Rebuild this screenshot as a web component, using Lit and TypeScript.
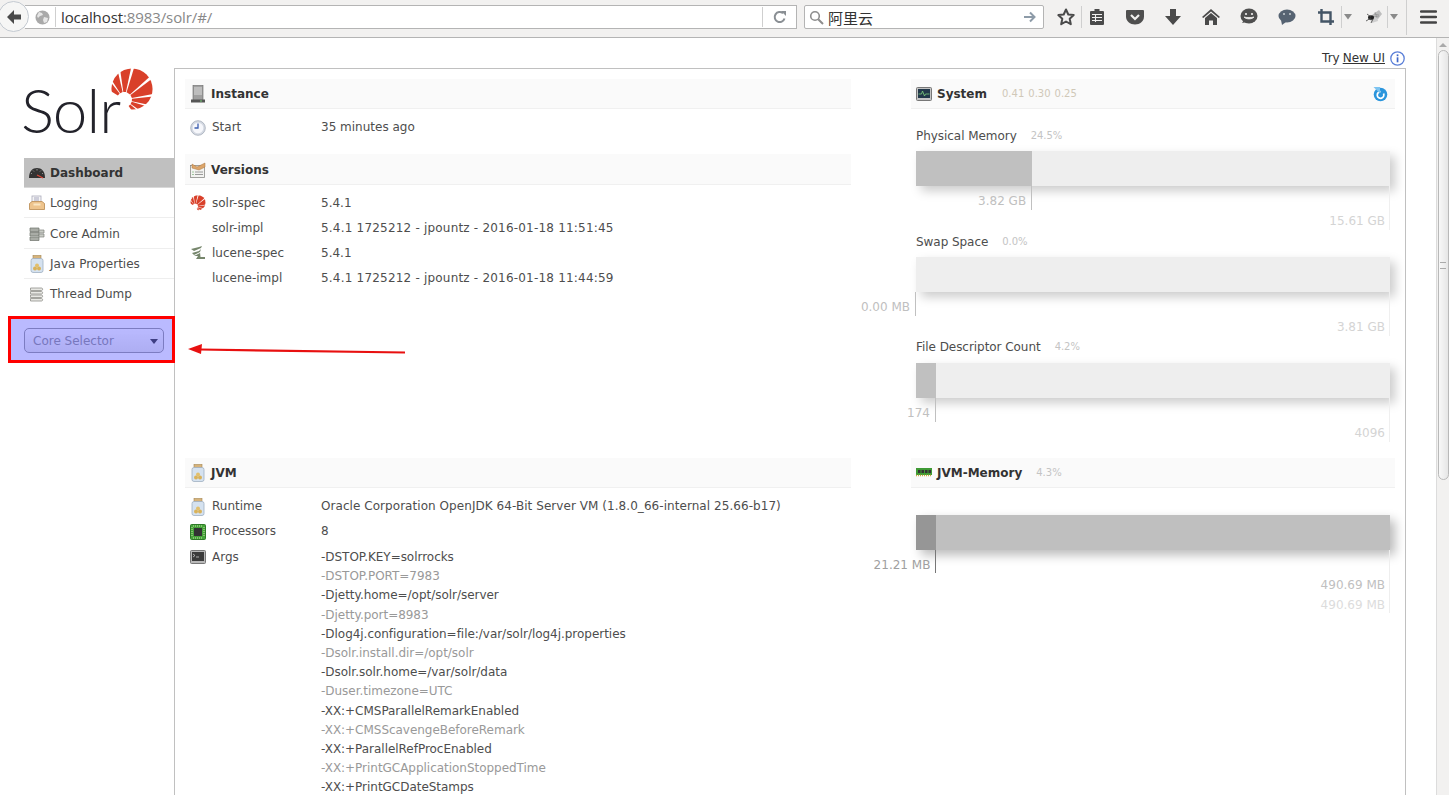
import { LitElement, html, css, svg } from "lit";
import { customElement } from "lit/decorators.js";

const WEDGES: [number, number][] = [[128, 148], [103, 123], [78, 98], [42, 73], [11, 37], [-12, 6], [-35, -17], [-56, -40]];
function sun(size: number) {
  const fx = 15, fy = 33;
  const pt = (r: number, a: number) => `${(fx + r * Math.cos((a * Math.PI) / 180)).toFixed(2)} ${(fy - r * Math.sin((a * Math.PI) / 180)).toFixed(2)}`;
  return html`<svg width=${size} height=${size} viewBox="0 0 46 46">
    <defs><clipPath id="sunclip"><circle cx="23" cy="22" r="21.5"></circle></clipPath></defs>
    <g clip-path="url(#sunclip)" fill="#d9402a">
      ${WEDGES.map(([a, b]) => svg`<path d="M${pt(8, a)} L${pt(60, a)} L${pt(60, b)} L${pt(8, b)} Z"></path>`)}
    </g></svg>`;
}

const I = {
  back: html`<svg width="18" height="18" viewBox="0 0 18 18"><path d="M9 2 2 9l7 7v-4.4h7V6.4H9z" fill="#4a4a4a"/></svg>`,
  globe: html`<svg width="15" height="15" viewBox="0 0 15 15"><circle cx="7.5" cy="7.5" r="7" fill="#a9a9a9"/><path d="M4 2l3 1 1 2-3 1-2 2-1-2zM9 7l4 1-1 4-3 1-1-3z" fill="#e6e6e6"/></svg>`,
  reload: html`<svg width="14" height="14" viewBox="0 0 14 14"><path d="M11.5 8.5A5 5 0 1 1 10 3.3" fill="none" stroke="#8a8f94" stroke-width="2"/><path d="M8 1h5v5z" fill="#8a8f94"/></svg>`,
  search: html`<svg width="15" height="15" viewBox="0 0 15 15"><circle cx="6" cy="6" r="4.3" fill="none" stroke="#8d8d8d" stroke-width="1.6"/><path d="M9.2 9.2 14 14" stroke="#8d8d8d" stroke-width="2"/></svg>`,
  go: html`<svg width="14" height="14" viewBox="0 0 14 14"><path d="M1 7h10M7 2.5 11.5 7 7 11.5" fill="none" stroke="#8d9ba8" stroke-width="2"/></svg>`,
  star: html`<svg width="20" height="20" viewBox="0 0 20 20"><path d="M10 2.5l2.3 5 5.4.6-4 3.7 1.1 5.4-4.8-2.7-4.8 2.7 1.1-5.4-4-3.7 5.4-.6z" fill="none" stroke="#4a4a4a" stroke-width="2" stroke-linejoin="round"/></svg>`,
  clip: html`<svg width="16" height="18" viewBox="0 0 16 18"><path d="M5.5 1h5v2H14a1 1 0 0 1 1 1v12a1 1 0 0 1-1 1H2a1 1 0 0 1-1-1V4a1 1 0 0 1 1-1h3.500z" fill="#4a4a4a"/><path d="M3 6.500h10M3 9.500h10M3 12.500h10M6.500 6v8" stroke="#f2f1f0" stroke-width="1.100" fill="none"/></svg>`,
  pocket: html`<svg width="18" height="16" viewBox="0 0 18 16"><path d="M1 1h16a1 1 0 0 1 1 1v5.500c0 4.500-4 8-9 8s-9-3.500-9-8V2a1 1 0 0 1 1-1z" fill="#4f4f4f"/><path d="M5 6l4 4 4-4" fill="none" stroke="#f2f1f0" stroke-width="2.200"/></svg>`,
  down: html`<svg width="16" height="16" viewBox="0 0 16 16"><path d="M5 0h6v7h5l-8 9-8-9h5z" fill="#4a4a4a"/></svg>`,
  home: html`<svg width="18" height="16" viewBox="0 0 18 16"><path d="M9 0 0 8l1.300 1L9 2.500 16.700 9 18 8z" fill="#4a4a4a"/><path d="M9 4 3 9v7h4v-4.500h4V16h4V9z" fill="#4a4a4a"/></svg>`,
  smile: html`<svg width="18" height="18" viewBox="0 0 18 18"><ellipse cx="9" cy="8" rx="8.500" ry="7.500" fill="#4f4f4f"/><path d="M2 15l2-3 3 2z" fill="#4f4f4f"/><circle cx="6" cy="6" r="1.100" fill="#f2f1f0"/><circle cx="12" cy="6" r="1.100" fill="#f2f1f0"/><path d="M4 9c2 2.500 8 2.500 10 0-2 .8-8 .8-10 0z" fill="#f2f1f0" stroke="#f2f1f0" stroke-width=".8"/></svg>`,
  chat: html`<svg width="18" height="16" viewBox="0 0 18 16"><ellipse cx="9" cy="7" rx="8.500" ry="6.500" fill="#566372"/><path d="M3 11l1 5 4-3z" fill="#566372"/><circle cx="6" cy="5" r="1" fill="#c9ced3"/><circle cx="12" cy="5" r="1" fill="#c9ced3"/></svg>`,
  crop: html`<svg width="16" height="16" viewBox="0 0 16 16"><path d="M3.500 0v12.500H16M0 3.500h12.500V16" fill="none" stroke="#445566" stroke-width="2.400"/></svg>`,
  caret: html`<svg width="8" height="6" viewBox="0 0 8 6"><path d="M0 0h8L4 5.500z" fill="#8a8a8a"/></svg>`,
  fly: html`<svg width="16" height="14" viewBox="0 0 16 14"><path d="M6 5 13 0l3 4-4 5-5 1z" fill="#bdbdbd"/><path d="M3 8l8-2 1 5-6 2z" fill="#cfcfcf"/><path d="M8 4l5 1M7 7l6-1M9 2l2 6" stroke="#8a8a8a" stroke-width=".6"/><ellipse cx="5" cy="7.500" rx="3" ry="2.300" fill="#222"/><path d="M0 11l5-3M1 4l4 3M5 13l2-4" stroke="#444" stroke-width=".8"/></svg>`,
  burger: html`<svg width="17" height="14" viewBox="0 0 17 14"><path d="M1 1.500h15M1 7h15M1 12.500h15" stroke="#444" stroke-width="2.400" stroke-linecap="round"/></svg>`,
  info: html`<svg width="15" height="15" viewBox="0 0 15 15"><circle cx="7.500" cy="7.500" r="6.700" fill="#fff" stroke="#5a7fd8" stroke-width="1.300"/><rect x="6.700" y="6.300" width="1.700" height="5" fill="#3f66c8"/><rect x="6.700" y="3.400" width="1.700" height="1.800" fill="#3f66c8"/></svg>`,
  refresh: html`<svg width="16" height="16" viewBox="0 0 16 16"><circle cx="8.500" cy="8.500" r="6.800" fill="#2b95dc"/><path d="M11.500 7.500a3.300 3.300 0 1 1-3-1.800" fill="none" stroke="#fff" stroke-width="1.700"/><path d="M1.500 1h6.500v6.500z" fill="#7cc3f0"/></svg>`,
  gauge: html`<svg width="16" height="12" viewBox="0 0 16 12"><path d="M0 11C0 4 3.500 1 8 1s8 3 8 10z" fill="#333"/><path d="M2 6.500h1M4 3.500l1 1M8 2v1.500M12 3.500l-1 1M13 6.500h1" stroke="#aaa" stroke-width=".8"/><path d="M8 8l6 3" stroke="#e04a3a" stroke-width="1.100"/></svg>`,
  tray: html`<svg width="16" height="16" viewBox="0 0 16 16"><rect x="3" y="1" width="9" height="8" fill="#f5f5f5" stroke="#aab" stroke-width=".8"/><path d="M5 3h5M5 5h5" stroke="#88a" stroke-width=".7"/><path d="M0.500 8.500 3 6.500h10l2.500 2v6h-15z" fill="#eec48d" stroke="#b9894f" stroke-width=".8"/><path d="M4.500 8.500h7v2h-7z" fill="#fbe6c2"/></svg>`,
  servers: html`<svg width="16" height="16" viewBox="0 0 16 16"><path d="M1 2h9v3.500H1zM1 6.500h9V10H1zM1 11h9v3.500H1z" fill="#a9aca6" stroke="#6f726c" stroke-width=".7"/><path d="M10 4h5v3h-5zM10 8h5v3h-5z" fill="#c9ccc6" stroke="#7f827c" stroke-width=".7"/></svg>`,
  jar: html`<svg width="14" height="18" viewBox="0 0 14 18"><rect x="3" y="0.500" width="8" height="3" fill="#d6b37b" stroke="#a58650" stroke-width=".6"/><rect x="1" y="3.500" width="12" height="14" rx="2" fill="#d5e2f0" stroke="#9fb0c2" stroke-width=".8"/><circle cx="5" cy="13.500" r="2" fill="#d9b25a"/><circle cx="9" cy="13.500" r="2" fill="#d9b25a"/><circle cx="7" cy="10.500" r="2" fill="#e2bf6c"/></svg>`,
  stack: html`<svg width="16" height="16" viewBox="0 0 16 16"><path d="M1.500 2h11c1.500 0 1.500 2.500 0 2.500h-11zM1.500 5.500h11c1.500 0 1.500 2.500 0 2.500h-11zM1.500 9h11c1.500 0 1.500 2.500 0 2.500h-11zM1.500 12.500h11c1.500 0 1.500 2.500 0 2.500h-11z" fill="#e8e8e4" stroke="#8f8f8a" stroke-width=".8"/></svg>`,
  server: html`<svg width="16" height="18" viewBox="0 0 16 18"><rect x="3" y="0.500" width="10" height="15" fill="#a0a0a0" stroke="#666" stroke-width=".6"/><path d="M4 3h8M4 5h8M4 7h8M4 9h8" stroke="#dcdcdc"/><rect x="1" y="14.500" width="14" height="3" fill="#555"/><rect x="10" y="15.500" width="2" height="1" fill="#7c7"/></svg>`,
  clock: html`<svg width="16" height="16" viewBox="0 0 16 16"><circle cx="8" cy="8" r="7.300" fill="#d5dae3" stroke="#a5acb9" stroke-width=".8"/><circle cx="8" cy="8" r="5.300" fill="#f6f7fb"/><path d="M8 3.500V8H4.500" fill="none" stroke="#3c5fb0" stroke-width="1.300"/></svg>`,
  versions: html`<svg width="16" height="16" viewBox="0 0 16 16"><rect x="0.500" y="3.500" width="14" height="12" fill="#f3f3f1" stroke="#8c8c88" stroke-width=".8"/><path d="M2 2l5 3 8-4v4l-6 3-7-2z" fill="#dca56a" stroke="#a9743c" stroke-width=".5"/><path d="M2.500 10h1M2.500 12.500h1" stroke="#4a9a4a"/><path d="M5 10h8M5 12.500h8" stroke="#9a9a9a"/></svg>`,
  lucene: html`<svg width="16" height="16" viewBox="0 0 16 16"><path d="M1 4l8-2 3-1-1 2-7 3zM2 8l7-2 2-2-1 3-6 3zM4 11l6-3 0-1 .5 5H15v2H6l2-3z" fill="#76866c"/></svg>`,
  chip: html`<svg width="16" height="16" viewBox="0 0 16 16"><rect x="0.500" y="0.500" width="15" height="15" rx="1" fill="#45a339" stroke="#2e7a27"/><rect x="4" y="4" width="8" height="8" fill="#333"/><path d="M2 3v10M14 3v10M3 2h10M3 14h10" stroke="#c7e2a8" stroke-dasharray="1 1"/></svg>`,
  term: html`<svg width="16" height="14" viewBox="0 0 16 14"><rect x="0.500" y="0.500" width="15" height="13" rx="1" fill="#b8b8b8" stroke="#777"/><rect x="2" y="2" width="12" height="9" fill="#3a3a3a"/><path d="M3 4l2 1.500L3 7M6 7h3" stroke="#ddd" stroke-width=".7" fill="none"/></svg>`,
  sys: html`<svg width="16" height="14" viewBox="0 0 16 14"><rect x="0.500" y="0.500" width="15" height="13" rx="1" fill="#c4c4c4" stroke="#777"/><rect x="2" y="2" width="12" height="9" fill="#22384a"/><path d="M2.500 7h3l1-3 2 5 1-2h4" stroke="#7fd07f" stroke-width=".8" fill="none"/></svg>`,
  ram: html`<svg width="16" height="9" viewBox="0 0 16 9"><rect x="0" y="0" width="16" height="7" fill="#3f9a35"/><path d="M2 2h2.500v3H2zM5.500 2H8v3H5.500zM9 2h2.500v3H9zM12.500 2H15v3h-2.500z" fill="#333"/><path d="M0 7.500h16" stroke="#c9a83f" stroke-width="1.500" stroke-dasharray="1 1"/></svg>`,
};

const ARGS = [
  "-DSTOP.KEY=solrrocks", "-DSTOP.PORT=7983", "-Djetty.home=/opt/solr/server", "-Djetty.port=8983",
  "-Dlog4j.configuration=file:/var/solr/log4j.properties", "-Dsolr.install.dir=/opt/solr",
  "-Dsolr.solr.home=/var/solr/data", "-Duser.timezone=UTC", "-XX:+CMSParallelRemarkEnabled",
  "-XX:+CMSScavengeBeforeRemark", "-XX:+ParallelRefProcEnabled", "-XX:+PrintGCApplicationStoppedTime",
  "-XX:+PrintGCDateStamps",
];

interface Bar { title?: string; pct?: string; used: number; usedLabel: string; totalLabel: string; }
const BARS: Bar[] = [
  { title: "Physical Memory", pct: "24.5%", used: 24.5, usedLabel: "3.82 GB", totalLabel: "15.61 GB" },
  { title: "Swap Space", pct: "0.0%", used: 0, usedLabel: "0.00 MB", totalLabel: "3.81 GB" },
  { title: "File Descriptor Count", pct: "4.2%", used: 4.2, usedLabel: "174", totalLabel: "4096" },
];

@customElement("app-root")
export class AppRoot extends LitElement {
  static styles = css`
    :host { display: block; height: 795px; overflow: hidden; position: relative; background: #fff;
      font-family: "DejaVu Sans", sans-serif; font-size: 12px; color: #4d4d4d; }
    .toolbar { height: 37px; background: #f2f1f0; border-bottom: 1px solid #b4b4b4; display: flex; align-items: center; padding-left: 25px; position: relative; }
    .backbtn { position: absolute; left: -2px; top: 1px; width: 29px; height: 29px; border-radius: 50%; background: #f6f6f5; border: 1px solid #c4cad1; display: flex; align-items: center; justify-content: center; }
    .urlbar { width: 772px; height: 24px; box-sizing: border-box; background: #fff; border: 1px solid #b4b4b4; border-left: 0; display: flex; align-items: center; margin-top: -3px; }
    .globe { margin-left: 10px; display: flex; }
    .vsep { width: 1px; height: 20px; background: #cfcfcf; flex: none; }
    .urlbar .vsep { margin-left: 5px; }
    .url { font-family: "Open Sans", sans-serif; font-size: 15px; letter-spacing: -0.1px; color: #888; margin-left: 5px; flex: 1; white-space: nowrap; }
    .url b { font-weight: 400; color: #333; }
    .rel { width: 33px; display: flex; justify-content: center; }
    .search { width: 240px; height: 24px; box-sizing: border-box; background: #fff; border: 1px solid #b4b4b4; border-radius: 2px; margin-left: 7px; margin-top: -3px; display: flex; align-items: center; padding: 0 6px 0 4px; }
    .search span { font-family: "Noto Sans CJK SC", sans-serif; font-size: 15px; color: #333; margin-left: 4px; flex: 1; }
    .search svg { flex: none; }
    .slot { display: flex; align-items: center; justify-content: center; height: 36px; margin-top: -3px; flex: none; }
    .w30 { width: 30px; } .w38 { width: 38px; } .w11 { width: 11px; } .w26 { width: 26px; } .w42 { width: 42px; }
    .bsep { height: 22px; margin-top: -3px; }
    .tall { height: 36px; }
    .ml7 { margin-left: 7px; } .ml4 { margin-left: 4px; } .ml5 { margin-left: 5px; } .ml8 { margin-left: 8px; }

    .viewport { display: flex; height: 757px; overflow: hidden; }
    .page { flex: 1; min-width: 0; }
    .scroll { width: 13px; background: #f2f1f0; border-left: 1px solid #dcdcdc; box-sizing: border-box; display: flex; flex-direction: column; align-items: center; }
    .sup { width: 0; height: 0; border-left: 4px solid transparent; border-right: 4px solid transparent; border-bottom: 4px solid #aaa; margin: 5px 0 3px; }
    .thumb { width: 11px; height: 430px; box-sizing: border-box; border: 1px solid #b9b9b9; border-radius: 6px; background: linear-gradient(90deg, #f8f8f8, #e6e6e6); display: flex; align-items: center; justify-content: center; }
    .thumb i { display: block; width: 6px; height: 5px; border-top: 1px solid #aaa; border-bottom: 1px solid #aaa; }

    .try { height: 30px; box-sizing: border-box; padding: 10px 31px 0 0; display: flex; justify-content: flex-end; align-items: center; gap: 3px; color: #333; font-size: 12px; }
    .try a { color: #333; text-decoration: underline; }
    .try svg { margin-left: 2px; }
    .wrap { display: flex; padding-left: 24px; padding-right: 30px; }
    .side { width: 150px; flex: none; }
    .logo { height: 90px; display: flex; position: relative; }
    .logo .word { font-family: "Lato", "Open Sans", sans-serif; font-weight: 300; font-size: 62px; color: #23232b; line-height: 62px; margin-top: 10px; margin-left: -3px; letter-spacing: -1px; }
    .logo svg { position: absolute; left: 85.500px; top: -0.500px; }
    nav a { display: flex; align-items: center; height: 29px; padding-left: 5px; gap: 5px; border-bottom: 1px solid #eee; color: #4d4d4d; }
    nav a:nth-child(3) { height: 29px; padding-top: 1px; }
    nav a:last-child { border-bottom: 0; }
    nav a.on { background: #c0c0c0; font-weight: 700; color: #333; border-bottom: 1px solid #d8d8d8; }
    nav .ic { width: 16px; display: flex; justify-content: center; align-items: center; flex: none; }
    .select { margin-top: 20px; width: 140px; height: 25px; box-sizing: border-box; border: 1px solid #aaa; border-radius: 5px; background: linear-gradient(#fff, #eee); display: flex; align-items: center; padding: 1px 5px 0 8px; color: #a4a4a4; }
    .select span { flex: 1; }
    .select i { width: 0; height: 0; border-left: 4px solid transparent; border-right: 4px solid transparent; border-top: 5px solid #555; }

    .content { flex: 1; min-width: 0; height: 740px; border: 1px solid #c0c0c0; border-bottom: 0; padding: 10px; box-sizing: border-box; display: grid; grid-template-columns: 666px 484px; column-gap: 60px; grid-template-rows: 379px auto; }
    h2 { margin: 0; height: 29px; background: #fafafa; border-bottom: 1px solid #f0f0f0; display: flex; align-items: center; padding-left: 5px; gap: 5px; font-size: 12px; font-weight: 700; color: #333; }
    h2 .ic { width: 16px; display: flex; justify-content: center; flex: none; }
    h2 small { font-size: 10px; font-weight: 400; color: #c4c4c4; margin-left: 9px; }
    h2 .load { display: flex; gap: 4px; margin-left: 10px; font-size: 10px; font-weight: 400; color: #d0c8b8; flex: 1; }
    h2 .end { margin-right: 7px; display: flex; }
    section + section { margin-top: 14px; }
    section + section h2 { height: 29px; padding-top: 1px; }
    .rows { margin-top: 6px; }
    section + section .rows { margin-top: 5.500px; }
    .row { display: flex; align-items: flex-start; padding-left: 5px; min-height: 25px; line-height: 25px; }
    .row .ic { width: 16px; height: 25px; display: flex; align-items: center; justify-content: center; flex: none; }
    .row .k { width: 109px; margin-left: 6px; flex: none; }
    .row .k.low { padding-top: 1px; }
    .row .v { flex: 1; color: #4d4d4d; }
    .row .v.wide { letter-spacing: 0.2px; }
    .row .v.rt { letter-spacing: 0.055px; }
    .args { line-height: 19.200px; padding-top: 4px; color: #222; letter-spacing: -0.03px; }
    .args div:nth-child(even) { color: #999; }

    .groups { margin-top: 16px; padding: 0 5px; }
    .grp { height: 106px; }
    .grp .t { height: 20px; line-height: 20px; padding-top: 0.600px; box-sizing: border-box; display: flex; gap: 14px; color: #4d4d4d; letter-spacing: -0.05px; }
    .grp:nth-child(3) .t { padding-top: 0; }
    .grp .t small { font-size: 10px; color: #c4c4c4; }
    .bar { height: 35px; margin-top: 6px; background: #eee; box-shadow: 5px 5px 10px #ccc; position: relative; }
    .bar .fill { height: 100%; background: #c0c0c0; }
    .labels { position: relative; }
    .tick { position: absolute; top: 0; width: 1px; background: #c0c0c0; margin-left: -1px; }
    .tick.t1 { height: 24px; } .tick.t2 { height: 44px; background: #efefef; }
    .usedtext { position: absolute; top: 5px; white-space: nowrap; color: #c0c0c0; transform: translateX(-100%); line-height: 20px; }
    .tottext { position: absolute; top: 25px; right: 5px; white-space: nowrap; color: #d4d4d4; line-height: 20px; }
    .jvm .groups { margin-top: 27px; }
    .jvm .bar { background: #bfbfbf; margin-top: 0; box-shadow: 5px 5px 10px #bbb; }
    .jvm .bar .fill { background: #969696; }
    .jvm .usedtext { color: #a0a0a0; }
    .jvm .tick.t1 { height: 23px; background: #777; }
    .jvm .tick.t2 { height: 43px; background: #b4b4b4; }
    .jvm .tick.t3 { height: 63px; background: #eee; }
    .jvm .tottext { color: #c0c0c0; }
    .jvm .tottext.max { top: 45px; color: #dcdcdc; }

    .redbox { position: absolute; left: 8px; top: 316px; width: 167px; height: 47px; box-sizing: border-box; border: 3px solid #f00; background: rgba(0, 0, 255, 0.27); }
    .arrow { position: absolute; left: 180px; top: 335px; }
  `;

  private bar(b: Bar) {
    return html`<div class="grp">
      <div class="t"><span>${b.title}</span><small>${b.pct}</small></div>
      <div class="bar"><div class="fill" style="width:${b.used}%"></div></div>
      <div class="labels">
        <div class="tick t1" style="left:${b.used}%"></div>
        <div class="tick t2" style="right:0"></div>
        <div class="usedtext" style="left:calc(${b.used}% - 6px)">${b.usedLabel}</div>
        <div class="tottext">${b.totalLabel}</div>
      </div>
    </div>`;
  }

  render() {
    return html`
      <div class="toolbar">
        <div class="backbtn">${I.back}</div>
        <div class="urlbar">
          <span class="globe">${I.globe}</span><div class="vsep"></div>
          <span class="url"><b>localhost</b>:8983/solr/#/</span>
          <div class="vsep"></div><span class="rel">${I.reload}</span>
        </div>
        <div class="search">${I.search}<span>阿里云</span>${I.go}</div>
        <div class="slot w30 ml7">${I.star}</div><div class="vsep bsep"></div>
        <div class="slot w30">${I.clip}</div>
        <div class="slot w38 ml4">${I.pocket}</div>
        <div class="slot w38">${I.down}</div>
        <div class="slot w38">${I.home}</div>
        <div class="slot w38">${I.smile}</div>
        <div class="slot w38">${I.chat}</div>
        <div class="slot w30 ml5">${I.crop}</div><div class="vsep bsep"></div>
        <div class="slot w11">${I.caret}</div>
        <div class="slot w26 ml8">${I.fly}</div><div class="vsep bsep"></div>
        <div class="slot w11">${I.caret}</div>
        <div class="vsep bsep ml7 tall"></div>
        <div class="slot w42">${I.burger}</div>
      </div>
      <div class="viewport">
        <div class="page">
          <div class="try">Try <a>New UI</a>${I.info}</div>
          <div class="wrap">
            <div class="side">
              <div class="logo"><span class="word">Solr</span>${sun(44)}</div>
              <nav>
                <a class="on"><span class="ic">${I.gauge}</span>Dashboard</a>
                <a><span class="ic">${I.tray}</span>Logging</a>
                <a><span class="ic">${I.servers}</span>Core Admin</a>
                <a><span class="ic">${I.jar}</span>Java Properties</a>
                <a><span class="ic">${I.stack}</span>Thread Dump</a>
              </nav>
              <div class="select"><span>Core Selector</span><i></i></div>
            </div>
            <div class="content">
              <div>
                <section>
                  <h2><span class="ic">${I.server}</span>Instance</h2>
                  <div class="rows"><div class="row"><span class="ic">${I.clock}</span><span class="k">Start</span><span class="v">35 minutes ago</span></div></div>
                </section>
                <section>
                  <h2><span class="ic">${I.versions}</span>Versions</h2>
                  <div class="rows">
                    <div class="row"><span class="ic">${sun(16)}</span><span class="k">solr-spec</span><span class="v">5.4.1</span></div>
                    <div class="row"><span class="ic"></span><span class="k">solr-impl</span><span class="v wide">5.4.1 1725212 - jpountz - 2016-01-18 11:51:45</span></div>
                    <div class="row"><span class="ic">${I.lucene}</span><span class="k">lucene-spec</span><span class="v">5.4.1</span></div>
                    <div class="row"><span class="ic"></span><span class="k">lucene-impl</span><span class="v wide">5.4.1 1725212 - jpountz - 2016-01-18 11:44:59</span></div>
                  </div>
                </section>
              </div>
              <div>
                <h2><span class="ic">${I.sys}</span>System<span class="load"><span>0.41</span><span>0.30</span><span>0.25</span></span><span class="end">${I.refresh}</span></h2>
                <div class="groups">${BARS.map((b) => this.bar(b))}</div>
              </div>
              <div>
                <h2><span class="ic">${I.jar}</span>JVM</h2>
                <div class="rows">
                  <div class="row"><span class="ic">${I.jar}</span><span class="k">Runtime</span><span class="v rt">Oracle Corporation OpenJDK 64-Bit Server VM (1.8.0_66-internal 25.66-b17)</span></div>
                  <div class="row"><span class="ic">${I.chip}</span><span class="k">Processors</span><span class="v">8</span></div>
                  <div class="row"><span class="ic">${I.term}</span><span class="k low">Args</span><span class="v args">${ARGS.map((a) => html`<div>${a}</div>`)}</span></div>
                </div>
              </div>
              <div class="jvm">
                <h2><span class="ic">${I.ram}</span>JVM-Memory<small>4.3%</small></h2>
                <div class="groups">
                  <div class="bar"><div class="fill" style="width:4.3%"></div></div>
                  <div class="labels">
                    <div class="tick t1" style="left:4.3%"></div>
                    <div class="tick t2" style="right:0"></div>
                    <div class="tick t3" style="right:0"></div>
                    <div class="usedtext" style="left:calc(4.3% - 6px)">21.21 MB</div>
                    <div class="tottext">490.69 MB</div>
                    <div class="tottext max">490.69 MB</div>
                  </div>
                </div>
              </div>
            </div>
          </div>
        </div>
        <div class="scroll"><div class="sup"></div><div class="thumb"><i></i></div></div>
      </div>
      <div class="redbox"></div>
      <svg class="arrow" width="230" height="30" viewBox="0 0 230 30"><path d="M225 17.500 20 14.500" stroke="#e81010" stroke-width="2.200"/><path d="M8 14l14-5-1 10z" fill="#e81010"/></svg>
    `;
  }
}
